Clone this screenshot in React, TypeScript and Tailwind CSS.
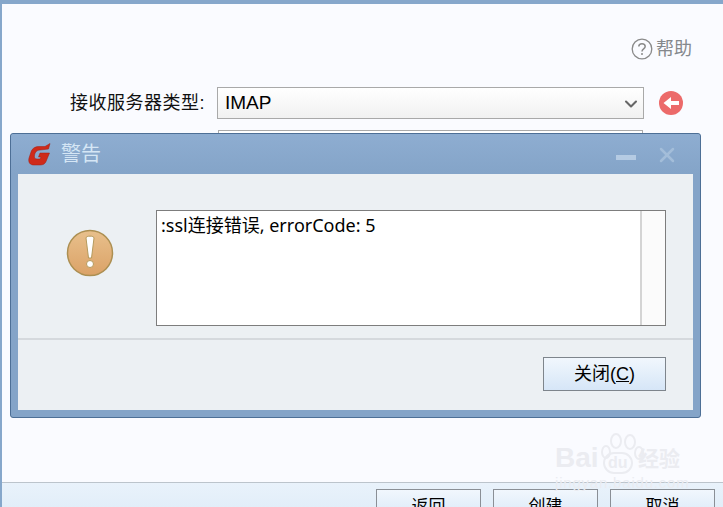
import { ChevronDown, X } from 'lucide-react';

const cjk = "font-['Liberation_Sans','Noto_Sans_CJK_SC',sans-serif]";

// Red "G" logo in the dialog title
const Logo = () => (
    <svg width="23" height="23" viewBox="0 0 23 23">
        <path
            d="M22 0.500 L20.500 6 L12 7 C9 7 7 9 6.500 12 C6 15 7 16 9 16 L12 16 L13 14 L10.500 14 L12 10 L21.500 10 L18 18.500 C17 21 15 22 12 22 L6 22 C2 22 0 19.500 1 15 L3 9 C4 5.500 7 3.500 11 3.500 L17 3.500 Z"
            fill="#cf2a1a"
            stroke="#a31d10"
            strokeWidth="0.500"
        />
    </svg>
);

const WarningIcon = () => (
    <svg width="48" height="48" viewBox="0 0 48 48">
        <defs>
            <linearGradient id="warn" x1="0" y1="0" x2="0" y2="1">
                <stop offset="0" stopColor="#e8c08c" />
                <stop offset="1" stopColor="#dba267" />
            </linearGradient>
        </defs>
        <circle cx="24" cy="24" r="22.500" fill="url(#warn)" stroke="#ac8f51" strokeWidth="1.500" />
        <path d="M20 9 C20 6.500 28 6.500 28 9 L25.500 29 L22.500 29 Z" fill="#fff" stroke="#b49a5c" strokeWidth="1" />
        <circle cx="24" cy="35" r="3.500" fill="#fff" stroke="#b49a5c" strokeWidth="1" />
    </svg>
);

const BackIcon = () => (
    <svg width="24" height="24" viewBox="0 0 24 24">
        <circle cx="12" cy="12" r="12" fill="#ec6a6a" />
        <path d="M4.500 12 L12 6 L12 10 L20 10 L20 14 L12 14 L12 18 Z" fill="#fff" />
    </svg>
);

const HelpIcon = () => (
    <svg width="22" height="22" viewBox="0 0 22 22">
        <circle cx="11" cy="11" r="9.800" fill="none" stroke="#8a8a8a" strokeWidth="1.300" />
        <path d="M7.800 8.500 C7.800 4.800 14.200 4.800 14.200 8.500 C14.200 11 11 10.800 11 13.500" fill="none" stroke="#8a8a8a" strokeWidth="1.500" />
        <circle cx="11" cy="16" r="1" fill="#8a8a8a" />
    </svg>
);

const Watermark = () => (
    <div className="absolute left-[552px] top-[428px] w-[140px] h-[70px] text-[#ebecf1] pointer-events-none">
        <svg className="absolute left-[46px] top-0" width="46" height="46" viewBox="0 0 46 46" fill="none" stroke="#ebecf1" strokeWidth="2">
            <ellipse cx="16" cy="9" rx="5" ry="7" />
            <ellipse cx="30" cy="10" rx="5" ry="7" />
            <ellipse cx="6" cy="20" rx="4" ry="6" />
            <ellipse cx="39" cy="21" rx="4" ry="6" />
        </svg>
        <span className="absolute left-[1px] top-[10px] text-[28px] leading-[32px] font-['Liberation_Sans',sans-serif] font-bold">Bai</span>
        <span className="absolute left-[49px] top-[20px] text-[16px] leading-[18px] font-['Liberation_Sans',sans-serif] font-bold border-2 border-[#ebecf1] rounded-[12px] px-[3px]">du</span>
        <span className={`absolute left-[84px] top-[13px] text-[21px] leading-[28px] font-bold ${cjk}`}>经验</span>
        <span className="absolute left-[1px] top-[42px] text-[15px] leading-[18px] tracking-[0.8px] font-['Liberation_Sans',sans-serif]">jingyan.baidu.com</span>
    </div>
);

const FooterButton = ({ label }: { label: string }) => (
    <button className="w-[105px] h-[34px] shrink-0 border border-[#8a8f96] bg-gradient-to-b from-[#f1f7fd] to-[#d6e6f7] text-[17px] leading-[34px] text-black">
        {label}
    </button>
);

export default function App() {
    return (
        <div className={`relative w-[723px] h-[507px] overflow-hidden flex flex-col bg-[#fafbff] border-t-4 border-l-2 border-[#86a7cb] ${cjk}`}>
            {/* Page behind the dialog */}
            <div className="flex-1 flex flex-col">
                <div className="flex justify-end items-center gap-[3px] pt-[34px] pr-[31px] text-[18px] leading-[22px] text-[#85888c]">
                    <HelpIcon />
                    <span>帮助</span>
                </div>
                <div className="flex items-center mt-[27px]">
                    <label className="w-[203px] text-right text-[18px] leading-[32px] text-[#111] tracking-[0.5px]">接收服务器类型:</label>
                    <div className="ml-[12px] w-[427px] h-[32px] border border-[#a9a9a9] bg-gradient-to-b from-[#ffffff] to-[#f1f1f1] flex items-center justify-between pl-[7px] pr-[2px] pt-[1px] text-[19px] text-black">
                        <span>IMAP</span>
                        <ChevronDown size={20} strokeWidth={2.500} className="text-[#666]" />
                    </div>
                    <div className="ml-[15px]">
                        <BackIcon />
                    </div>
                </div>
                <div className="ml-[216px] mt-[11px] w-[425px] h-[32px] border border-[#a9a9a9] bg-white" />
            </div>

            {/* Footer */}
            <div className="h-[25px] shrink-0 overflow-hidden border-t border-[#bcc4cc] bg-gradient-to-b from-[#e9f2fb] to-[#e2eef9] pt-[6px] pr-[8px] flex justify-end gap-[12px]">
                <FooterButton label="返回" />
                <FooterButton label="创建" />
                <FooterButton label="取消" />
            </div>

            <Watermark />

            {/* Warning dialog */}
            <div className="absolute left-[8px] top-[129px] w-[691px] h-[285px] flex flex-col rounded-[3px] border border-[#4d6f96] bg-[#84a4c8] px-[7px] pb-[7px]">
                <div className="h-[40px] shrink-0 flex items-center -mx-[7px] px-[7px] rounded-t-[3px] bg-gradient-to-b from-[#8eadd1] to-[#84a4c8]">
                    <div className="ml-[10px]">
                        <Logo />
                    </div>
                    <span className="ml-[10px] text-[20px] text-[#d5e6f5]">警告</span>
                    <div className="ml-auto flex items-center gap-[19px] mr-[14px]">
                        <div className="w-[20px] h-[5px] mt-[7px] bg-[#b5cbe3]" />
                        <X size={24} strokeWidth={2.500} className="text-[#a3bdd9] mt-[1px]" />
                    </div>
                </div>
                <div className="flex-1 flex flex-col bg-[#ecf0f3]">
                    <div className="h-[166px] shrink-0 flex border-b-2 border-[#d5d9dd] pt-[36px] pr-[27px]">
                        <div className="w-[138px] pt-[19px] pl-[48px] shrink-0">
                            <WarningIcon />
                        </div>
                        <div className="w-[510px] h-[116px] border border-[#7d7d7d] bg-white flex">
                            <p className="flex-1 px-[4px] pt-[1px] text-[18px] leading-[26px] text-black font-['Noto_Sans','Noto_Sans_CJK_SC',sans-serif]">:ssl连接错误, errorCode: 5</p>
                            <div className="w-[25px] shrink-0 border-l-2 border-[#d4d4d4] bg-[#fbfbfb]" />
                        </div>
                    </div>
                    <div className="flex justify-end pt-[17px] pr-[27px]">
                        <button className="w-[123px] h-[34px] border border-[#7e858c] bg-gradient-to-b from-[#f1f7fd] to-[#d6e6f7] text-[18px] leading-[32px] text-black">
                            关闭(<span className="underline">C</span>)
                        </button>
                    </div>
                </div>
            </div>
        </div>
    );
}
